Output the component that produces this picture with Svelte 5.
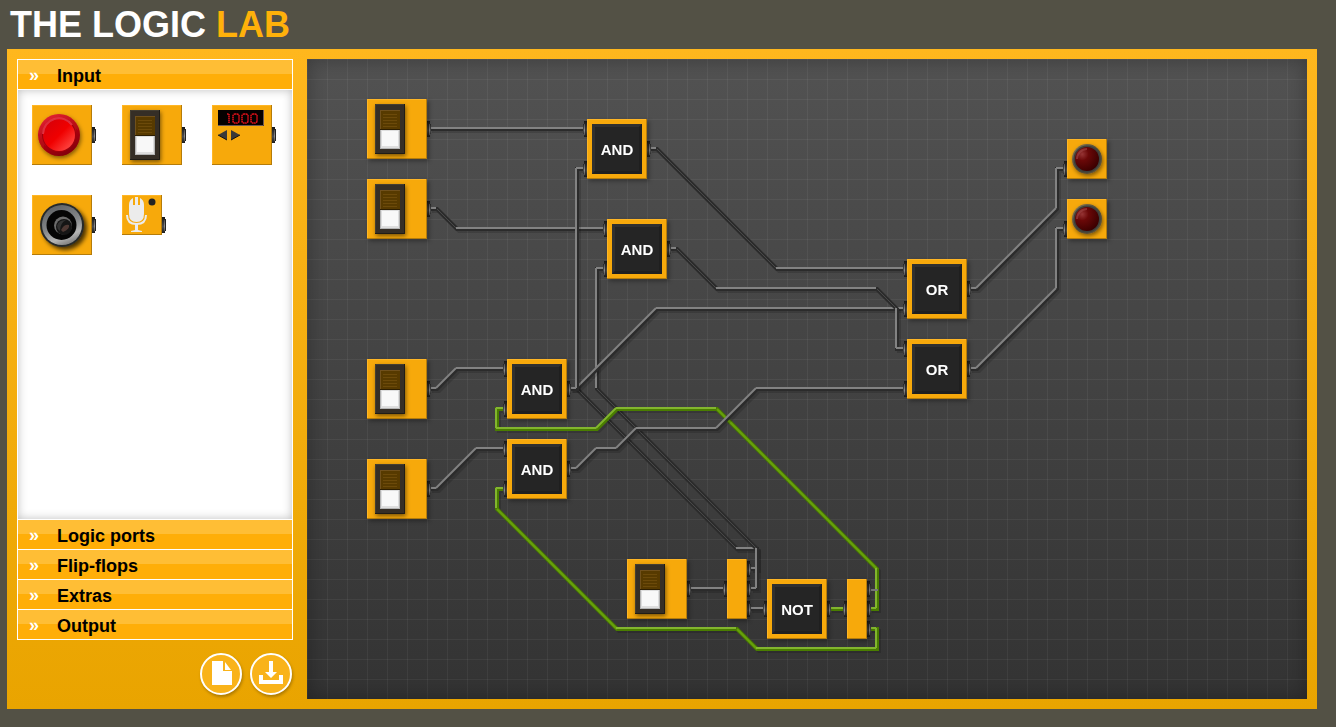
<script>
  const sections = ['Logic ports', 'Flip-flops', 'Extras', 'Output'];

  const switches = [[60, 40], [60, 120], [60, 300], [60, 400], [320, 500]];
  const gates = [
    [280, 60, 'AND'], [300, 160, 'AND'], [200, 300, 'AND'], [200, 380, 'AND'],
    [600, 200, 'OR'], [600, 280, 'OR'], [460, 520, 'NOT']
  ];
  const splitters = [[420, 500], [540, 520]];
  const lamps = [[760, 80], [760, 140]];

  const wires = [
    ['off', '264,330 270,330 430,490 450,490 450,510 444,510'],
    ['off', '298,210 290,210 290,330 450,490 450,530 444,530'],
    ['off', '123,70 278,70'],
    ['off', '123,150 130,150 150,170 298,170'],
    ['off', '343,90 350,90 470,210 598,210'],
    ['off', '270,330 350,250 598,250'],
    ['off', '363,190 370,190 410,230 570,230 590,250 590,290 598,290'],
    ['off', '263,330 270,330 270,110 278,110'],
    ['off', '123,330 130,330 150,310 198,310'],
    ['off', '123,430 130,430 170,390 198,390'],
    ['on', '198,350 190,350 190,370 290,370 310,350 410,350 570,510 570,550 563,550'],
    ['on', '198,430 190,430 190,450 310,570 430,570 450,590 570,590 570,570 563,570'],
    ['off', '263,410 270,410 290,390 310,390 330,370 410,370 450,330 598,330'],
    ['off', '383,530 418,530'],
    ['off', '443,550 458,550'],
    ['on', '523,550 538,550'],
    ['stub', '564,531 571,531'],
    ['off', '663,230 670,230 750,150 750,110 758,110'],
    ['off', '663,310 670,310 750,230 750,170 758,170']
  ];

  // The light comes from the top left, so a run that falls to the right has only a faint sheen.
  function segments(points) {
    const p = points.split(' ').map((s) => s.split(',').map(Number));
    return p.slice(1).map(([x2, y2], i) => {
      const [x1, y1] = p[i];
      const dim = (x2 - x1) * (y2 - y1) > 0;
      return { x1, y1, x2, y2, dim };
    });
  }

  const outputs = [
    [120, 70], [120, 150], [120, 330], [120, 430], [380, 530],
    [340, 90], [360, 190], [260, 330], [260, 410], [660, 230], [660, 310], [520, 550],
    [440, 510], [440, 530], [440, 550], [560, 530], [560, 550], [560, 570]
  ];
  const inputs = [
    [280, 70], [280, 110], [300, 170], [300, 210], [200, 310], [200, 350], [200, 390], [200, 430],
    [600, 210], [600, 250], [600, 290], [600, 330], [420, 530], [460, 550], [540, 550],
    [760, 110], [760, 170]
  ];
</script>

{#snippet plate(w, h)}
  <rect width={w} height={h} fill="#f7a90b" />
  <path d="M0 .5H{w}M.5 0V{h}" stroke="#ffb625" fill="none" />
  <path d="M0 {h - 0.5}H{w}M{w - 0.5} 0V{h}" stroke="#b57c0a" fill="none" />
{/snippet}

{#snippet outPort(x, y)}
  <g transform="translate({x} {y})">
    <path d="M0-8H3V-6H4V6H3V8H0Z" fill="url(#port)" />
    <path d="M3.5-6V6" stroke="#222" />
    <path d="M2.5-5V6" stroke="url(#portShine)" />
  </g>
{/snippet}

{#snippet boardPort()}
  <path d="M0-8H3V-5H4V5H3V8H0Z" fill="url(#port)" />
  <path d="M1-8H2V8H1Z" fill="#222" fill-opacity=".5" />
  <path d="M2-5H3V6H2Z" fill="url(#portShine)" />
{/snippet}

{#snippet rocker()}
  {@render plate(60, 60)}
  <rect x="8" y="5" width="30" height="50" fill="#342f26" filter="url(#soft)" />
  <path d="M8.5 55V5.5H38" stroke="#443e32" fill="none" />
  <path d="M8 54.5H37.5V5" stroke="#1f1c16" fill="none" />
  <rect x="13" y="11" width="20" height="20" fill="#573a00" />
  <path d="M13 11.5H33M13.5 11V30" stroke="#70501c" fill="none" />
  <path d="M16 15.5H30M16 18.5H30M16 21.5H30M16 24.5H30M16 27.5H30" stroke="#6c4a0a" />
  <path d="M13 30.5H33" stroke="#2d1e02" />
  <rect x="13" y="31" width="20" height="19" fill="#b4b4b4" />
  <rect x="14" y="31" width="18" height="18" fill="#dedede" />
  <rect x="15" y="32" width="16" height="15" fill="#f8f8f8" />
{/snippet}

<header><h1>THE LOGIC <span>LAB</span></h1></header>

<svg class="defs" aria-hidden="true">
  <defs>
    <linearGradient id="port" x2="0" y2="1">
      <stop offset="0" stop-color="#161616" /><stop offset=".3" stop-color="#333" />
      <stop offset=".6" stop-color="#4c4c4c" /><stop offset="1" stop-color="#1c1c1c" />
    </linearGradient>
    <linearGradient id="portShine" gradientUnits="userSpaceOnUse" x1="0" y1="-6" x2="0" y2="7">
      <stop offset="0" stop-color="#444" /><stop offset=".55" stop-color="#909090" /><stop offset="1" stop-color="#444" />
    </linearGradient>
    <linearGradient id="redRim" x1=".2" y1="0" x2=".7" y2="1">
      <stop offset="0" stop-color="#e42235" /><stop offset=".5" stop-color="#b60814" /><stop offset="1" stop-color="#800006" />
    </linearGradient>
    <linearGradient id="redCap" x1=".1" y1=".1" x2=".9" y2=".9">
      <stop offset="0" stop-color="#d80008" /><stop offset=".5" stop-color="#f00000" /><stop offset="1" stop-color="#ff4a45" />
    </linearGradient>
    <linearGradient id="metal" x1=".3" y1="0" x2=".7" y2="1">
      <stop offset="0" stop-color="#606366" /><stop offset=".5" stop-color="#85888a" />
      <stop offset=".78" stop-color="#b5b5b5" /><stop offset="1" stop-color="#777" />
    </linearGradient>
    <radialGradient id="bulb" cx=".3" cy=".3" r=".75">
      <stop offset="0" stop-color="#963434" /><stop offset=".35" stop-color="#6a0808" /><stop offset="1" stop-color="#3c0000" />
    </radialGradient>
    <linearGradient id="bulbRim" x2="1" y2="1">
      <stop offset="0" stop-color="#93805a" /><stop offset=".5" stop-color="#494637" /><stop offset="1" stop-color="#66573a" />
    </linearGradient>
    <filter id="soft" x="-30%" y="-30%" width="170%" height="170%">
      <feDropShadow dx="1" dy="2" stdDeviation="2" flood-color="#000" flood-opacity=".5" />
    </filter>
    <filter id="deep" x="-30%" y="-30%" width="170%" height="170%">
      <feDropShadow dx="3" dy="3" stdDeviation="2" flood-color="#000" flood-opacity=".7" />
    </filter>
  </defs>
</svg>

<main>
  <aside>
    <nav aria-label="Components">
      <button class="bar" aria-expanded="true"><span class="mark">»</span>Input</button>
      <div class="tray">
        <svg class="part" width="66" height="62" viewBox="0 0 66 62" role="img" aria-label="Push button">
          {@render plate(60, 60)}{@render outPort(60, 30)}
          <circle cx="27" cy="30" r="21" fill="url(#redRim)" filter="url(#soft)" />
          <circle cx="27" cy="30" r="17" fill="#a1000b" />
          <circle cx="27" cy="30" r="16" fill="url(#redCap)" />
          <path d="M11 29A16 16 0 0 1 40 20" stroke="#e83a4b" stroke-width="2" fill="none" opacity=".8" />
        </svg>
        <svg class="part" width="66" height="62" viewBox="0 0 66 62" role="img" aria-label="Switch">
          {@render rocker()}{@render outPort(60, 30)}
        </svg>
        <svg class="part" width="66" height="62" viewBox="0 0 66 62" role="img" aria-label="Clock">
          {@render plate(60, 60)}{@render outPort(60, 30)}
          <rect x="6" y="5" width="46" height="16" fill="#060000" />
          <path d="M6 20.5H51.5V5" stroke="#6d5a55" fill="none" />
          <g fill="none" stroke="#e01018" stroke-width="1.6" stroke-dasharray="1.6 .4">
            <path d="M15 9H17V18" />
            <rect x="21" y="9" width="6" height="9" rx="2" />
            <rect x="30" y="9" width="6" height="9" rx="2" />
            <rect x="39" y="9" width="6" height="9" rx="2" />
          </g>
          <path d="M15 25V35L6 30Z" fill="#393939" /><path d="M19 25V35L28 30Z" fill="#393939" />
          <path d="M15 35L6 30M19 35L28 30" stroke="#111" />
        </svg>
        <svg class="part" width="66" height="62" viewBox="0 0 66 62" role="img" aria-label="Light sensor">
          {@render plate(60, 60)}{@render outPort(60, 30)}
          <circle cx="30" cy="30" r="22" fill="#26292b" filter="url(#deep)" />
          <circle cx="30" cy="30" r="20" fill="url(#metal)" />
          <circle cx="29.5" cy="30" r="15" fill="#050505" />
          <circle cx="31" cy="30.5" r="9" fill="#6c6c6c" />
          <circle cx="32" cy="32" r="8" fill="#151515" />
          <path d="M25 31Q26 25 34 25Q28 28 28 36Q25 34 25 31Z" fill="#333" />
          <path d="M29 35Q32 29 37 30Q38 34 31 37Z" fill="#4e3833" />
        </svg>
        <svg class="part" width="46" height="42" viewBox="0 0 46 42" role="img" aria-label="Microphone">
          {@render plate(40, 40)}{@render outPort(40, 30)}
          <path d="M7 10Q7 5 11 3V10H13V2H16V10H18V3Q22 5 22 10V19Q22 27 14.5 27Q7 27 7 19Z" fill="#ececec" />
          <path d="M5 20Q5 29 14.500 29Q24 29 24 20" fill="none" stroke="#ececec" stroke-width="2" />
          <path d="M13 29H16V35L20 36V37H9V36L13 35Z" fill="#ececec" />
          <circle cx="30" cy="7" r="3.5" fill="#222" />
        </svg>
      </div>
      {#each sections as name}
        <button class="bar" aria-expanded="false"><span class="mark">»</span>{name}</button>
      {/each}
    </nav>
    <div class="actions">
      <button class="round" aria-label="New">
        <svg width="42" height="42" viewBox="0 0 42 42"><path d="M12 8H23V18H32V32H12Z M25 9L31 17H25Z" fill="#fff" /></svg>
      </button>
      <button class="round" aria-label="Save">
        <svg width="42" height="42" viewBox="0 0 42 42"><path d="M19 8H23V19H27L21 25L15 19H19Z M9 22H13V27H29V22H33V31H9Z" fill="#fff" /></svg>
      </button>
    </div>
  </aside>

  <section class="board" aria-label="Circuit">
    <svg width="1000" height="640" viewBox="0 0 1000 640">
      {#each wires as [state, points]}
        <g class={state} fill="none">
          <polyline class="shade" {points} transform="translate(2 2)" />
          <polyline class="core" {points} />
          {#each segments(points) as s}
            {#if s.dim}
              <line class="shine dim" x1={s.x1} y1={s.y1} x2={s.x2} y2={s.y2} />
            {:else}
              <line class="shine" x1={s.x1} y1={s.y1} x2={s.x2} y2={s.y2} transform="translate(-1 -1)" />
            {/if}
          {/each}
        </g>
      {/each}
      {#each outputs as [x, y]}
        <g transform="translate({x} {y})">{@render boardPort()}</g>
      {/each}
      {#each inputs as [x, y]}
        <g transform="translate({x} {y}) scale(-1 1)">{@render boardPort()}</g>
      {/each}
      {#each switches as [x, y]}
        <g class="device" transform="translate({x} {y})">{@render rocker()}</g>
      {/each}
      {#each splitters as [x, y]}
        <g class="device" transform="translate({x} {y})">{@render plate(20, 60)}</g>
      {/each}
      {#each gates as [x, y, name]}
        <g class="device" transform="translate({x} {y})">
          {@render plate(60, 60)}
          <rect x="5" y="5" width="50" height="50" fill="#252525" />
          <path d="M5 5H55L52 8H8V52L5 55Z" fill="#303030" />
          <path d="M55 5V55H5L8 52H52V8Z" fill="#1f1f1f" />
          <text x="30" y="36">{name}</text>
        </g>
      {/each}
      {#each lamps as [x, y]}
        <g class="device" transform="translate({x} {y})">
          {@render plate(40, 40)}
          <circle cx="20" cy="20" r="15" fill="url(#bulbRim)" filter="url(#soft)" />
          <circle cx="20" cy="20" r="13.5" fill="#3c403d" />
          <circle cx="20" cy="20" r="12" fill="url(#bulb)" />
          <path d="M10 20A10 10 0 0 1 20 10" fill="none" stroke="#a04848" stroke-opacity=".6" stroke-width="2" />
        </g>
      {/each}
    </svg>
  </section>
</main>

<style>
  :global(body) {
    background: #535145;
    font-family: "Liberation Sans", Arial, Helvetica, sans-serif;
  }
  header { padding: 2px 10px 0; }
  h1 { margin: 0; font-size: 36px; line-height: 46px; height: 47px; color: #fff; }
  h1 span { color: #ffb10a; }
  .defs { display: block; width: 0; height: 0; }
  main {
    display: flex;
    gap: 14px;
    margin: 0 19px 18px 7px;
    padding: 10px;
    background: linear-gradient(#ffb71d, #e9a400);
  }
  aside { flex: none; width: 276px; display: flex; flex-direction: column; }
  nav { border: 1px solid #fff; display: flex; flex-direction: column; }
  .bar {
    display: flex;
    align-items: center;
    height: 30px;
    padding: 2px 11px 0;
    border: 0;
    border-bottom: 1px solid #fff;
    background: linear-gradient(#ffbe35 0 14px, #ffae08 14px);
    font: bold 18px/28px "Liberation Sans", Arial, sans-serif;
    color: #000;
    text-align: left;
  }
  .bar:last-child { border-bottom: 0; height: 29px; }
  .mark { width: 28px; color: #fff; line-height: 20px; padding-bottom: 2px; }
  .tray {
    display: grid;
    grid-template-columns: repeat(3, 90px);
    grid-auto-rows: 90px;
    height: 414px;
    padding: 15px 0 0 14px;
    overflow: hidden;
    border-bottom: 1px solid #fff;
    background: #fff;
    box-shadow: inset 0 0 10px rgba(0, 0, 0, .25);
  }
  .part { display: block; }
  .actions { display: flex; justify-content: flex-end; gap: 8px; padding: 13px 1px 0; }
  .round {
    width: 42px;
    height: 42px;
    padding: 0;
    border: 2px solid #fff;
    border-radius: 50%;
    background: #f9b31a;
    box-shadow: 1px 2px 3px rgba(0, 0, 0, .25);
  }
  .round svg { display: block; margin: -2px; }
  .board {
    flex: 1;
    min-width: 0;
    overflow: hidden;
    box-shadow: inset 0 0 20px rgba(0, 0, 0, .3);
    background:
      linear-gradient(90deg, rgba(255, 255, 255, .05) 1px, transparent 1px) 0 0 / 20px 20px,
      linear-gradient(rgba(255, 255, 255, .05) 1px, transparent 1px) 0 0 / 20px 20px,
      linear-gradient(#525252, #333);
  }
  .board svg { display: block; }
  .shade { stroke: #000; stroke-opacity: .15; stroke-width: 4; }
  .core { stroke: #2b2b2b; stroke-width: 4; }
  .shine { stroke: #828282; stroke-width: 2; }
  .off .dim { stroke: #484848; stroke-width: 1; }
  .on .core { stroke: #4a7d00; }
  .on .shine { stroke: #82b52e; }
  .on .dim { stroke: #68a00c; }
  .stub .core { stroke: #777; stroke-width: 2; }
  .stub .shade, .stub .shine { stroke: none; }
  .device { filter: drop-shadow(2px 2px 2px rgba(0, 0, 0, .35)); }
  text { fill: #fff; font-size: 15px; font-weight: bold; text-anchor: middle; }
</style>
